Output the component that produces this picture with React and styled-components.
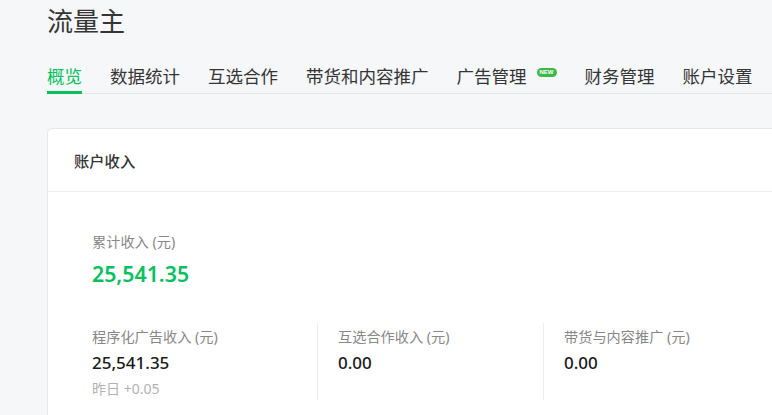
import React from 'react';
import styled, { createGlobalStyle } from 'styled-components';

const tabs = [
  { id: 1, label: '概览', active: true },
  { id: 2, label: '数据统计' },
  { id: 3, label: '互选合作' },
  { id: 4, label: '带货和内容推广' },
  { id: 5, label: '广告管理', badge: 'NEW' },
  { id: 6, label: '财务管理' },
  { id: 7, label: '账户设置' },
];

const columns = [
  { id: 1, label: '程序化广告收入 (元)', value: '25,541.35', extra: '昨日 +0.05' },
  { id: 2, label: '互选合作收入 (元)', value: '0.00' },
  { id: 3, label: '带货与内容推广 (元)', value: '0.00' },
];

const GlobalStyle = createGlobalStyle`
  html, body {
    margin: 0;
    padding: 0;
    background: #f6f7f9;
    overflow: hidden;
  }
  body {
    font-family: "Noto Sans", "Noto Sans CJK SC", sans-serif;
    color: #353535;
  }
`;

const App = () => {
  return (
    <Page>
      <GlobalStyle />
      <Title>流量主</Title>
      <Nav>
        {tabs.map(tab => (
          <Tab key={tab.id} $active={tab.active}>
            {tab.label}
            {tab.badge && <Badge>{tab.badge}</Badge>}
          </Tab>
        ))}
      </Nav>
      <Card>
        <CardHeader>账户收入</CardHeader>
        <CardBody>
          <Label>累计收入 (元)</Label>
          <Total>25,541.35</Total>
          <Columns>
            {columns.map(col => (
              <Column key={col.id}>
                <Label>{col.label}</Label>
                <Value>{col.value}</Value>
                {col.extra && <Extra>{col.extra}</Extra>}
              </Column>
            ))}
          </Columns>
        </CardBody>
      </Card>
    </Page>
  );
};

const Page = styled.div`
  padding: 3px 0 0 47px;
  width: 800px;
`;

const Title = styled.h1`
  margin: 0;
  font-size: 26px;
  line-height: 36px;
  font-weight: 400;
  color: #353535;
`;

const Nav = styled.div`
  display: flex;
  gap: 28px;
  margin-top: 25px;
  border-bottom: 1px solid #e4e4e6;
`;

const Tab = styled.div`
  display: flex;
  align-items: flex-start;
  font-size: 17.5px;
  line-height: 24px;
  padding-bottom: 3px;
  margin-bottom: -1px;
  border-bottom: 3px solid ${p => (p.$active ? '#07c160' : 'transparent')};
  color: ${p => (p.$active ? '#07c160' : '#353535')};
  white-space: nowrap;
`;

const Badge = styled.span`
  margin: 4px 0 0 10px;
  width: 20px;
  height: 9px;
  border-radius: 5px;
  background: #3cb94a;
  color: #fff;
  font-size: 6px;
  line-height: 9px;
  font-weight: 700;
  text-align: center;
  font-family: "Liberation Sans", sans-serif;
`;

const Card = styled.div`
  margin-top: 34px;
  width: 760px;
  height: 300px;
  background: #fff;
  border: 1px solid #e8e8ea;
  border-radius: 5px;
`;

const CardHeader = styled.div`
  height: 62px;
  display: flex;
  align-items: center;
  padding: 0 26px;
  font-size: 15.3px;
  font-weight: 500;
  color: #353535;
  border-bottom: 1px solid #eeeef0;
`;

const CardBody = styled.div`
  padding: 40px 0 0 44px;
`;

const Label = styled.div`
  font-size: 14.2px;
  line-height: 20px;
  color: #888;
`;

const Total = styled.div`
  margin-top: 6px;
  font-size: 21.3px;
  line-height: 32px;
  font-weight: 600;
  color: #07c160;
`;

const Columns = styled.div`
  display: grid;
  grid-template-columns: 225px 226px 226px;
  margin-top: 33px;
`;

const Column = styled.div`
  padding: 4px 0 1px 20px;
  border-left: 1px solid #ededed;

  &:first-child {
    padding-left: 0;
    border-left: none;
  }
`;

const Value = styled.div`
  margin-top: 3px;
  font-size: 17px;
  line-height: 26px;
  font-weight: 500;
  color: #1a1a1a;
`;

const Extra = styled.div`
  margin-top: 3px;
  font-size: 14px;
  line-height: 20px;
  color: #b2b2b2;
`;

export default App;
